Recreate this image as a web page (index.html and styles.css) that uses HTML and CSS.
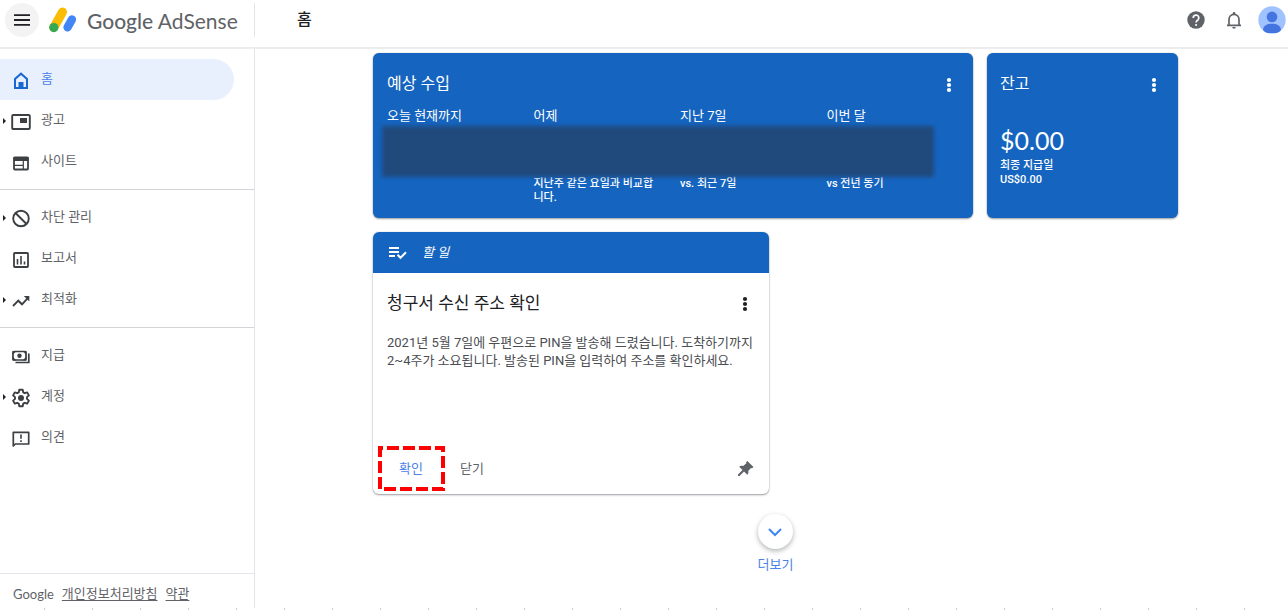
FILE: index.html
```html
<!DOCTYPE html>
<html lang="ko">
<head>
<meta charset="utf-8">
<title>Google AdSense</title>
<link rel="stylesheet" href="styles.css">
</head>
<body>
<header class="topbar">
  <div class="brand">
    <button class="menu-button" type="button" aria-label="메뉴">
      <svg width="18" height="18" viewBox="0 0 18 18" fill="none" stroke="#202124" stroke-width="1.8"><path d="M1 4.2h16M1 9h16M1 13.8h16"/></svg>
    </button>
    <svg class="logo" width="28" height="26" viewBox="0 0 28 26" fill="none" stroke-linecap="round">
      <path d="M4.8 20.5 13.5 5" stroke="#fbbc04" stroke-width="9"/>
      <path d="M18.6 20.3 22.9 12.5" stroke="#4285f4" stroke-width="8.4"/>
      <circle cx="4.8" cy="20.6" r="4.6" fill="#34a853"/>
    </svg>
    <span class="wordmark"><b>Google</b> AdSense</span>
  </div>
  <h1 class="page-title">홈</h1>
  <div class="tools">
    <button class="tool" type="button" aria-label="도움말">
      <svg width="20" height="20" viewBox="0 0 20 20"><circle cx="10" cy="10" r="8.7" fill="#5f6368"/><path d="M7.2 7.9a2.8 2.8 0 1 1 4.8 1.9c-1 .9-1.900 1.400-1.900 2.800" fill="none" stroke="#fff" stroke-width="1.7"/><circle cx="10.1" cy="15" r="1.05" fill="#fff"/></svg>
    </button>
    <button class="tool" type="button" aria-label="알림">
      <svg width="20" height="20" viewBox="0 0 20 20"><path d="M3 15.3h14M5 15V9.300a5 5 0 0 1 10 0V15" fill="none" stroke="#5f6368" stroke-width="1.7"/><path d="M8.700 4.600V3.300a1.300 1.300 0 0 1 2.600 0v1.300zM8.200 17h3.600a1.800 1.800 0 0 1-3.600 0z" fill="#5f6368"/></svg>
    </button>
    <button class="tool" type="button" aria-label="계정">
      <svg width="28" height="28" viewBox="0 0 28 28"><defs><clipPath id="face"><circle cx="14" cy="14" r="13.7"/></clipPath></defs><circle cx="14" cy="14" r="13.7" fill="#a0c3ff"/><g clip-path="url(#face)" fill="#4374e0"><circle cx="14" cy="10.9" r="5.3"/><path d="M5.200 27v-3.500c0-3.800 4-5.700 8.800-5.700s8.800 1.900 8.800 5.700V27z"/></g></svg>
    </button>
  </div>
</header>
<div class="shell">
  <aside class="sidebar">
    <nav class="nav">
      <a class="item active" href="#"><span class="caret"></span>
        <svg class="icon" viewBox="0 0 20 20"><path d="M4 17V8l6-5.300L16 8v9z" fill="none" stroke="#1967d2" stroke-width="2"/><path d="M7.500 17.500V11h5v6.500z" fill="#1967d2"/></svg><span class="label">홈</span></a>
      <a class="item" href="#"><span class="caret open"></span>
        <svg class="icon" viewBox="0 0 20 20"><rect x="1.2" y="3" width="17.6" height="14" rx="1" fill="none" stroke="#3c4043" stroke-width="1.9"/><path d="M9 6h7v5H9z" fill="#3c4043"/></svg><span class="label">광고</span></a>
      <a class="item" href="#"><span class="caret"></span>
        <svg class="icon" viewBox="0 0 20 20"><rect x="3" y="4.500" width="14" height="12" rx=".8" fill="none" stroke="#3c4043" stroke-width="1.8"/><path d="M2.500 4h15v4h-15z" fill="#3c4043"/><path d="M3 12.300h9M12.300 8v8" stroke="#3c4043" stroke-width="1.2"/></svg><span class="label">사이트</span></a>
      <hr class="rule">
      <a class="item" href="#"><span class="caret open"></span>
        <svg class="icon" viewBox="0 0 20 20" fill="none" stroke="#3c4043" stroke-width="1.9"><circle cx="10" cy="9.500" r="7.800"/><path d="m4.500 4 11 11"/></svg><span class="label">차단 관리</span></a>
      <a class="item" href="#"><span class="caret"></span>
        <svg class="icon" viewBox="0 0 20 20" fill="none" stroke="#3c4043"><rect x="3" y="3" width="14" height="14" rx=".8" stroke-width="1.8"/><path d="M6.500 14.500V9M10 14.500V6M13.500 14.500v-3" stroke-width="1.6"/></svg><span class="label">보고서</span></a>
      <a class="item" href="#"><span class="caret open"></span>
        <svg class="icon" viewBox="0 0 20 20"><path d="m2 15 5.300-5.300 3.700 3.600 6-6.500" fill="none" stroke="#3c4043" stroke-width="1.9"/><path d="M12.800 5h5.500v5.500z" fill="#3c4043"/></svg><span class="label">최적화</span></a>
      <hr class="rule">
      <a class="item" href="#"><span class="caret"></span>
        <svg class="icon" viewBox="0 0 20 20"><path d="M17.800 6.500v9H4.500" fill="none" stroke="#3c4043" stroke-width="1.7"/><rect x="2" y="4.500" width="13" height="8.500" rx="1" fill="none" stroke="#3c4043" stroke-width="1.7"/><circle cx="8.500" cy="8.700" r="2.200" fill="#3c4043"/><path d="M1.500 4h4l-4 4zM15.500 4v4l-4-4zM1.500 13.500v-4l4 4zM15.500 13.500h-4l4-4z" fill="#3c4043"/></svg><span class="label">지급</span></a>
      <a class="item" href="#"><span class="caret open"></span>
        <svg class="icon" viewBox="0 0 20 20"><path d="M8.300 1.800h3.400l.5 2.500 1.600.9 2.400-.8 1.700 3-1.900 1.700v1.800l1.900 1.700-1.700 3-2.400-.8-1.600.9-.5 2.500H8.300l-.5-2.500-1.600-.9-2.400.8-1.700-3L4 10.900V9.100L2.100 7.400l1.700-3 2.400.8 1.600-.9z" fill="none" stroke="#3c4043" stroke-width="1.900" stroke-linejoin="round"/><circle cx="10" cy="10" r="3" fill="#3c4043"/></svg><span class="label">계정</span></a>
      <a class="item" href="#"><span class="caret"></span>
        <svg class="icon" viewBox="0 0 20 20"><path d="M2.300 17V3.300h15.400V15H4.300z" fill="none" stroke="#3c4043" stroke-width="1.700" stroke-linejoin="round"/><path d="M10 5.500v4.300M10 11.200V13" stroke="#3c4043" stroke-width="1.600"/></svg><span class="label">의견</span></a>
    </nav>
    <footer class="legal"><span class="google">Google</span><a href="#">개인정보처리방침</a><a href="#">약관</a></footer>
  </aside>
  <main class="main">
    <div class="cards">
      <section class="card blue earnings">
        <div class="card-head"><h2>예상 수입</h2>
          <button class="more" type="button" aria-label="더보기 메뉴"><svg width="6" height="16" viewBox="0 0 6 16" fill="currentColor"><circle cx="3" cy="3" r="2.100"/><circle cx="3" cy="8" r="2.100"/><circle cx="3" cy="13" r="2.100"/></svg></button></div>
        <div class="periods">
          <div class="period"><h3>오늘 현재까지</h3></div>
          <div class="period"><h3>어제</h3><p>지난주 같은 요일과 비교합니다.</p></div>
          <div class="period"><h3>지난 7일</h3><p>vs. 최근 7일</p></div>
          <div class="period"><h3>이번 달</h3><p>vs 전년 동기</p></div>
          <div class="mask"></div>
        </div>
      </section>
      <section class="card blue balance">
        <div class="card-head"><h2>잔고</h2>
          <button class="more" type="button" aria-label="더보기 메뉴"><svg width="6" height="16" viewBox="0 0 6 16" fill="currentColor"><circle cx="3" cy="3" r="2.100"/><circle cx="3" cy="8" r="2.100"/><circle cx="3" cy="13" r="2.100"/></svg></button></div>
        <p class="amount">$0.00</p>
        <p class="last">최종 지급일<br>US$0.00</p>
      </section>
      <section class="card todo">
        <div class="todo-bar">
          <svg width="20" height="16" viewBox="0 0 20 16" fill="none" stroke="#fff" stroke-width="2"><path d="M1 3h10M1 7h10M1 11h6M9.500 9.800l3 3L18 7.300"/></svg>
          <em>할 일</em>
        </div>
        <div class="todo-body">
          <div class="card-head"><h2>청구서 수신 주소 확인</h2>
            <button class="more" type="button" aria-label="더보기 메뉴"><svg width="6" height="16" viewBox="0 0 6 16" fill="currentColor"><circle cx="3" cy="3" r="2.100"/><circle cx="3" cy="8" r="2.100"/><circle cx="3" cy="13" r="2.100"/></svg></button></div>
          <p class="message">2021년 5월 7일에 우편으로 PIN을 발송해 드렸습니다. 도착하기까지 2~4주가 소요됩니다. 발송된 PIN을 입력하여 주소를 확인하세요.</p>
        </div>
        <div class="actions">
          <button class="action primary" type="button">확인
            <svg class="highlight" width="67" height="45" viewBox="0 0 67 45"><path d="M2 2h63v41H2z" fill="none" stroke="#f00" stroke-width="4" stroke-dasharray="12 4" stroke-dashoffset="9"/></svg>
          </button>
          <button class="action" type="button">닫기</button>
          <button class="pin" type="button" aria-label="고정"><svg width="20" height="20" viewBox="0 0 20 20"><path d="m12.300 2 6.200 6-1.500 1.200-1-.2-2.800 2.900c.5 1.500.2 2.700-.8 3.800L9 12.500 4.500 17H3v-1.500L7.500 11 4.200 7.800C5.300 6.700 6.700 6.500 8.200 7L11.400 4.200 11.100 3.200z" fill="#5f6368"/></svg></button>
        </div>
      </section>
    </div>
    <button class="show-more" type="button">
      <span class="disc"><svg width="16" height="10" viewBox="0 0 16 10" fill="none" stroke="#4285f4" stroke-width="2"><path d="m2 2 6 6 6-6"/></svg></span>
      더보기
    </button>
  </main>
</div>
<div class="ticks"></div>
</body>
</html>
```
FILE: styles.css
```css
* { box-sizing: border-box; }

body {
  margin: 0;
  min-height: 100vh;
  display: flex;
  flex-direction: column;
  background: #fff;
  color: #3c4043;
  font: 13px/18px Roboto, "Noto Sans CJK KR", sans-serif;
}

h1, h2, h3, p { margin: 0; font-weight: 400; }
button { border: 0; padding: 0; background: none; color: inherit; font: inherit; }
svg { display: block; flex: none; }

.topbar {
  display: flex;
  align-items: flex-start;
  height: 49px;
  border-bottom: 2px solid #ededef;
}
.brand {
  display: flex;
  align-items: center;
  width: 255px;
  height: 34px;
  margin-top: 3px;
  padding-left: 5px;
  border-right: 1px solid #e4e5ea;
}
.menu-button {
  display: flex;
  align-items: center;
  justify-content: center;
  width: 34px;
  height: 34px;
  border-radius: 50%;
  background: #f3f3f4;
}
.logo { margin: 0 10px; }
.wordmark { padding-top: 2px; color: #5f6368; font: 21px/26px Lato, sans-serif; white-space: nowrap; }
.wordmark b { font-weight: 500; }
.page-title { padding: 8px 0 0 42px; color: #202124; font-size: 16px; line-height: 24px; font-weight: 500; }
.tools { display: flex; align-items: center; gap: 14px; margin-left: auto; padding: 6px 2px 0 0; }
.tool:first-child { margin-right: 4px; }

.shell { flex: 1; display: flex; }
.sidebar {
  display: flex;
  flex-direction: column;
  width: 255px;
  border-right: 1px solid #e4e5ea;
}
.nav { flex: 1; padding-top: 10px; }
.item {
  display: flex;
  align-items: center;
  height: 41px;
  margin-right: 20px;
  border-radius: 0 21px 21px 0;
  color: #5f6368;
  text-decoration: none;
}
.item.active { background: #e8f0fe; color: #4a80e8; }
.icon { width: 20px; height: 20px; margin: 3px 10px 0 0; }
.label { padding-bottom: 2px; }
.caret { width: 11px; }
.open::before {
  content: "";
  display: block;
  width: 0;
  margin-left: 3px;
  border: 3px solid transparent;
  border-left-color: #202124;
  border-right: 0;
}
.rule { margin: 7px 0; border: 0; border-top: 1px solid #d4d5d8; }
.legal {
  display: flex;
  gap: 8px;
  padding: 11px 13px 5px;
  border-top: 1px solid #e4e5ea;
  color: #5f6368;
}
.legal a { color: inherit; text-underline-offset: 2px; }
.google { font: 13px/18px Lato, sans-serif; }

.main { flex: 1; padding: 4px 0 0 8px; }
.cards {
  display: grid;
  grid-template-columns: 396px 190px 191px;
  gap: 14px;
  justify-content: center;
}
.card {
  border-radius: 6px;
  background: #fff;
  box-shadow: 0 1px 2px rgba(60, 64, 67, .5), 0 0 1px rgba(60, 64, 67, .3);
}
.blue { min-height: 165px; padding: 18px 0 8px 14px; background: #1565c0; color: #fff; }
.earnings { grid-column: span 2; }
.card-head { display: flex; align-items: center; justify-content: space-between; }
.card-head h2 { font-size: 17px; line-height: 24px; }
.blue .card-head h2 { padding-top: 1px; font-size: 16px; }
.more { margin: 2px 21px 0 0; }
.periods {
  position: relative;
  display: grid;
  grid-template-columns: repeat(4, 1fr);
  margin-top: 11px;
}
.period { padding-right: 20px; }
.period h3 { font-size: 13px; line-height: 18px; }
.period p { margin-top: 52px; font-size: 11px; line-height: 14px; font-weight: 500; word-break: break-all; }
.mask {
  position: absolute;
  inset: 19px 39px auto -5px;
  height: 51px;
  background: #20497c;
  filter: blur(2px);
}
.balance { padding-left: 13px; }
.amount { margin-top: 28px; font: 25px/32px Lato, sans-serif; }
.last { margin-top: 3px; font-size: 11px; line-height: 14px; font-weight: 500; }

.todo-bar {
  display: flex;
  align-items: center;
  gap: 14px;
  height: 41px;
  padding-left: 15px;
  border-radius: 6px 6px 0 0;
  background: #1565c0;
  color: #fff;
}
.todo-body { min-height: 146px; padding: 18px 0 0 14px; color: #202124; }
.message { margin-top: 19px; padding-right: 12px; color: #4a4d51; }
.actions { display: flex; align-items: center; padding: 33px 14px 9px 26px; color: #5f6368; }
.action { height: 33px; margin-right: 37px; }
.primary { position: relative; color: #4d82ec; }
.highlight { position: absolute; top: -6px; left: -21px; }
.pin { margin-left: auto; }
.show-more {
  display: flex;
  flex-direction: column;
  align-items: center;
  gap: 7px;
  margin: 20px auto 0;
  color: #4d82ec;
}
.disc {
  display: flex;
  align-items: center;
  justify-content: center;
  width: 35px;
  height: 35px;
  border-radius: 50%;
  box-shadow: 0 2px 5px rgba(60, 64, 67, .4);
}
.ticks {
  height: 2px;
  background: repeating-linear-gradient(90deg, transparent 0 44px, #cfd0dc 44px 45px, transparent 45px 48px);
}
```
